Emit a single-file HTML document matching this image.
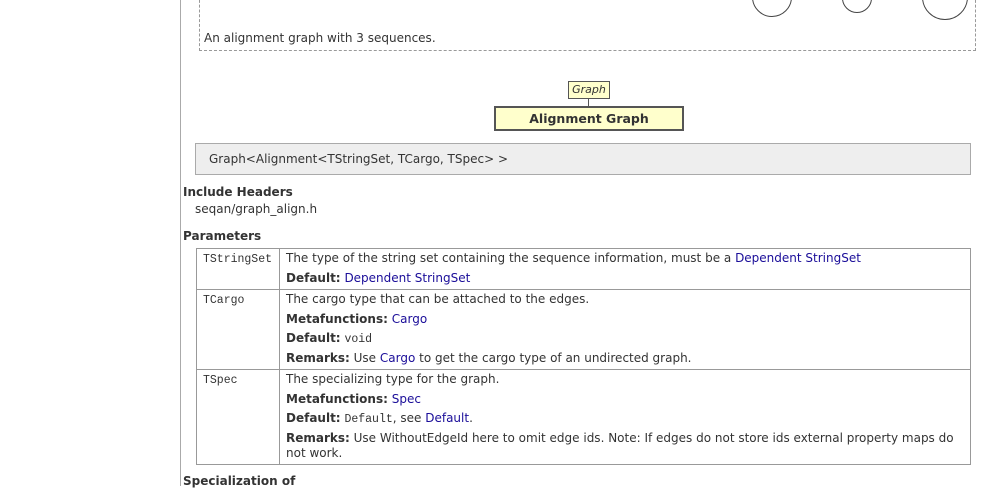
<!DOCTYPE html>
<html><head><style>
*{margin:0;padding:0;box-sizing:border-box}
body{width:1008px;height:486px;overflow:hidden;background:#fff;font-family:"DejaVu Sans","Liberation Sans",sans-serif;font-size:12px;color:#333;position:relative}
.a{position:absolute;white-space:nowrap}
a{color:#1a0d99;text-decoration:none}
b{color:#333}
code{font-family:"Liberation Mono",monospace;font-size:11.5px;line-height:1}
.c{position:absolute;border:1px solid #444;border-radius:50%;background:#fff}
td{vertical-align:top;border:1px solid #999;padding:0 6px}
table{border-collapse:collapse;position:absolute;left:196px;top:248px;width:775px}
td p{line-height:19.5px;height:19.5px}
</style></head><body>
<div class="a" style="left:180px;top:0;width:1px;height:486px;background:#aaa"></div>
<div class="a" style="left:199px;top:-5px;width:777px;height:56px;border:1px dashed #999;border-top:none"></div>
<div class="c" style="left:752px;top:-23px;width:40px;height:40px"></div>
<div class="c" style="left:842px;top:-17px;width:30px;height:30px"></div>
<div class="c" style="left:922px;top:-26px;width:46px;height:46px"></div>
<div class="a" style="left:204px;top:31px">An alignment graph with 3 sequences.</div>
<div class="a" style="left:568px;top:81px;width:42px;height:18px;border:1px solid #555;background:#ffffcc;font-style:italic;font-size:11px;text-align:center;line-height:16px">Graph</div>
<div class="a" style="left:588px;top:99px;width:1px;height:7px;background:#555"></div>
<div class="a" style="left:494px;top:106px;width:190px;height:25px;border:2px solid #555;background:#ffffcc;font-weight:bold;text-align:center;line-height:21px;font-size:12.5px">Alignment Graph</div>
<div class="a" style="left:195px;top:143px;width:776px;height:32px;border:1px solid #aaa;background:#eee;padding-left:13px;line-height:30px">Graph&lt;Alignment&lt;TStringSet, TCargo, TSpec&gt; &gt;</div>
<div class="a" style="left:183px;top:185px;font-weight:bold">Include Headers</div>
<div class="a" style="left:195px;top:202px">seqan/graph_align.h</div>
<div class="a" style="left:183px;top:229px;font-weight:bold">Parameters</div>
<table>
<tr style="height:41px"><td style="width:83px;padding:2px 6px"><code>TStringSet</code></td><td><p style="margin-top:0px">The type of the string set containing the sequence information, must be a <a>Dependent StringSet</a></p><p><b>Default:</b> <a>Dependent StringSet</a></p></td></tr>
<tr style="height:80px"><td style="padding:2px 6px"><code>TCargo</code></td><td><p>The cargo type that can be attached to the edges.</p><p><b>Metafunctions:</b> <a>Cargo</a></p><p><b>Default:</b> <code>void</code></p><p><b>Remarks:</b> Use <a>Cargo</a> to get the cargo type of an undirected graph.</p></td></tr>
<tr style="height:95px"><td style="padding:2px 6px"><code>TSpec</code></td><td><p>The specializing type for the graph.</p><p><b>Metafunctions:</b> <a>Spec</a></p><p><b>Default:</b> <code>Default</code>, see <a>Default</a>.</p><p style="line-height:15px;height:auto;margin-top:2px;white-space:normal"><b>Remarks:</b> Use WithoutEdgeId here to omit edge ids. Note: If edges do not store ids external property maps do not work.</p></td></tr>
</table>
<div class="a" style="left:183px;top:474px;font-weight:bold">Specialization of</div>
</body></html>
